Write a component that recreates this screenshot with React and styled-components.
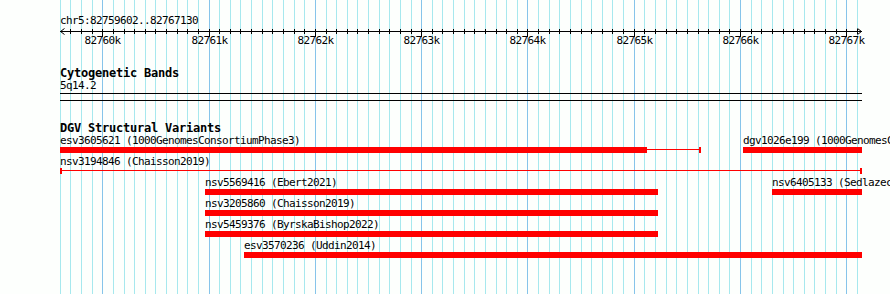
import React from 'react';
import styled, { createGlobalStyle } from 'styled-components';

const GlobalStyle = createGlobalStyle`
  html, body {
    margin: 0;
    padding: 0;
    background: #fdfffd;
  }
  body {
    overflow: hidden;
  }
`;

// scale of the ruler: px per bp, anchored on 82760k
const BP0 = 82760000;
const PX0 = 102.5;
const SCALE = 0.106286;
const LEFT = 60;

const col = bp => Math.floor(PX0 + (bp - BP0) * SCALE + 0.3);

const gridBp = [];
for (let bp = 82759600; bp <= 82767100; bp += 100) gridBp.push(bp);

const Canvas = styled.div`
  position: relative;
  width: 890px;
  height: 294px;
  overflow: hidden;
  background: #fdfffd;
  color: #000;
  font-family: "DejaVu Sans Mono", "Liberation Mono", monospace;
`;

const GridLayer = styled.svg`
  position: absolute;
  left: 0;
  top: 0;
  z-index: 0;
`;

const Panel = styled.div`
  position: relative;
  z-index: 1;
  width: 802px;
  margin-left: ${LEFT}px;
  padding-top: 15px;
`;

const Label = styled.div`
  font-size: 11px;
  letter-spacing: -0.62px;
  line-height: 12px;
  height: 12px;
  white-space: nowrap;
`;

const TrackTitle = styled.div`
  margin-top: ${({ $gap }) => $gap || 0}px;
  font-size: 12px;
  font-weight: bold;
  letter-spacing: -0.22px;
  line-height: 14px;
  height: 14px;
  white-space: nowrap;
`;

const Ruler = styled.svg`
  display: block;
  overflow: visible;
`;

const TickText = styled.text`
  font-family: "DejaVu Sans Mono", "Liberation Mono", monospace;
  font-size: 11px;
  letter-spacing: -0.62px;
  fill: #000;
`;

const Band = styled.div`
  margin-top: 1px;
  height: 6px;
  border-top: 1px solid #000;
  border-bottom: 1px solid #000;
`;

const FeatureRow = styled.div`
  position: relative;
  height: 21px;
`;

const Feature = styled.div`
  position: absolute;
  top: 0;
  display: flex;
  flex-direction: column;
`;

const Glyph = styled.div`
  display: flex;
  align-items: flex-start;
  height: 6px;
`;

const Thick = styled.div`
  flex: ${({ $w }) => ($w ? `0 0 ${$w}px` : '1 1 auto')};
  height: 6px;
  background: #ff0000;
`;

const Thin = styled.div`
  flex: 1 1 auto;
  height: 1px;
  margin-top: 2px;
  background: #ff0000;
`;

const Cap = styled.div`
  flex: none;
  width: 2px;
  height: 6px;
  background: #ff0000;
`;

const rows = [
  [
    { label: 'esv3605621 (1000GenomesConsortiumPhase3)', left: 0, width: 641, thick: 587, kind: 'partial' },
    { label: 'dgv1026e199 (1000GenomesConsortiumPhase3)', left: 683, width: 119 },
  ],
  [{ label: 'nsv3194846 (Chaisson2019)', left: 0, width: 802, kind: 'span' }],
  [
    { label: 'nsv5569416 (Ebert2021)', left: 145, width: 453 },
    { label: 'nsv6405133 (Sedlazeck2017)', left: 712, width: 90 },
  ],
  [{ label: 'nsv3205860 (Chaisson2019)', left: 145, width: 453 }],
  [{ label: 'nsv5459376 (ByrskaBishop2022)', left: 145, width: 453 }],
  [{ label: 'esv3570236 (Uddin2014)', left: 184, width: 618 }],
];

const Grid = () => (
  <GridLayer width={890} height={294} shapeRendering="crispEdges">
    {gridBp.map(bp => (
      <rect
        key={bp}
        x={col(bp)}
        y={0}
        width={1}
        height={294}
        fill={bp % 1000 === 0 ? '#86c4ea' : '#a6e8ee'}
      />
    ))}
  </GridLayer>
);

const Scale = () => {
  const ticks = gridBp.filter(bp => bp > 82759600);
  return (
    <Ruler width={802} height={39}>
      <g shapeRendering="crispEdges" stroke="#000">
        <line x1={0} y1={4.5} x2={802} y2={4.5} />
        {ticks.map(bp => {
          const x = col(bp) - LEFT + 0.5;
          return <line key={bp} x1={x} x2={x} y1={2} y2={bp % 1000 === 0 ? 10 : 7} />;
        })}
      </g>
      <path d="M4.5 1.5 L0.5 4.5 L4.5 7.5 M797.5 1.5 L801.5 4.5 L797.5 7.5" fill="none" stroke="#000" />
      {ticks
        .filter(bp => bp % 1000 === 0)
        .map(bp => (
          <TickText key={bp} x={col(bp) - LEFT + 0.5} y={17} textAnchor="middle">
            {bp / 1000}k
          </TickText>
        ))}
    </Ruler>
  );
};

const FeatureGlyph = ({ f }) => {
  if (f.kind === 'span') {
    return (
      <Glyph>
        <Cap />
        <Thin />
        <Cap />
      </Glyph>
    );
  }
  if (f.kind === 'partial') {
    return (
      <Glyph>
        <Thick $w={f.thick} />
        <Thin />
        <Cap />
      </Glyph>
    );
  }
  return (
    <Glyph>
      <Thick />
    </Glyph>
  );
};

const App = () => (
  <>
    <GlobalStyle />
    <Canvas>
      <Grid />
      <Panel>
        <Label>chr5:82759602..82767130</Label>
        <Scale />

        <TrackTitle>Cytogenetic Bands</TrackTitle>
        <Label>5q14.2</Label>
        <Band />

        <TrackTitle $gap={20}>DGV Structural Variants</TrackTitle>
        {rows.map((row, i) => (
          <FeatureRow key={i}>
            {row.map(f => (
              <Feature key={f.label} style={{ left: f.left, width: f.width }}>
                <Label>{f.label}</Label>
                <FeatureGlyph f={f} />
              </Feature>
            ))}
          </FeatureRow>
        ))}
      </Panel>
    </Canvas>
  </>
);

export default App;
